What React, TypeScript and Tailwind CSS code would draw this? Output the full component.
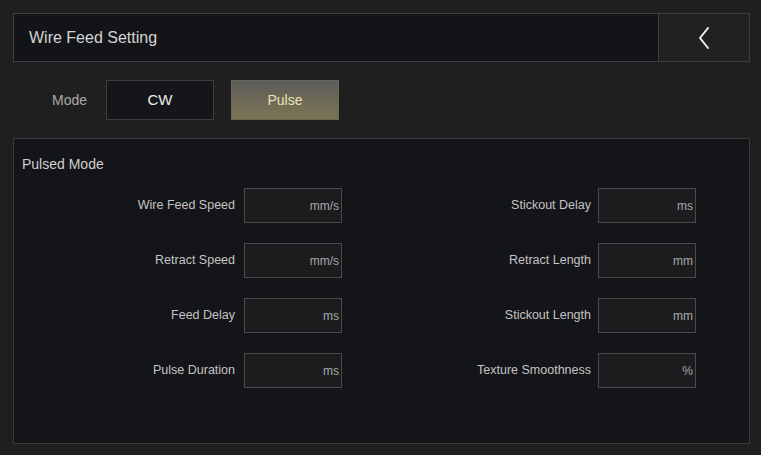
import React from "react";

const left = [
  ["Wire Feed Speed", "mm/s"],
  ["Retract Speed", "mm/s"],
  ["Feed Delay", "ms"],
  ["Pulse Duration", "ms"],
];
const right = [
  ["Stickout Delay", "ms"],
  ["Retract Length", "mm"],
  ["Stickout Length", "mm"],
  ["Texture Smoothness", "%"],
];

function Field({ label, unit, gap }: { label: string; unit: string; gap: string }) {
  return (
    <div className="flex items-center">
      <div className="w-[200px] text-right text-[12.5px] text-[#c4c4c4]">{label}</div>
      <div
        className={`${gap} h-[35px] w-[98px] border border-[#4a4a4a] bg-[#1b1c1e] flex items-center justify-end pr-[2px] text-[12px] text-[#a8a8a8]`}
      >
        {unit}
      </div>
    </div>
  );
}

export default function App() {
  return (
    <div
      className="w-[761px] h-[455px] bg-[#1f1f1f] overflow-hidden pt-[13px] px-[13px]"
      style={{ fontFamily: '"Liberation Sans", Arial, sans-serif' }}
    >
      <div className="flex h-[49px] w-[737px] border border-[#3e3e3e] bg-[#131417]">
        <div className="flex-1 flex items-center pl-[15px] text-[16px] text-[#d4d4d4]">
          Wire Feed Setting
        </div>
        <div className="w-[91px] h-full border-l border-[#3e3e3e] bg-[#202123] flex items-center justify-center">
          <svg width="14" height="24" viewBox="0 0 14 24">
            <path d="M11 2 L3 12 L11 22" fill="none" stroke="#f2f2f2" strokeWidth="2" strokeLinecap="round" strokeLinejoin="round" />
          </svg>
        </div>
      </div>

      <div className="flex items-center h-[40px] mt-[18px]">
        <div className="w-[93px] pl-[39px] text-[14px] text-[#a9a9a9]">Mode</div>
        <div className="w-[108px] h-[40px] border border-[#3e3e3e] bg-[#151619] flex items-center justify-center text-[15px] text-[#eeeeee]">
          CW
        </div>
        <div className="ml-[17px] w-[108px] h-[40px] border border-[#6a6758] bg-gradient-to-b from-[#5d5d5a] to-[#7c7452] flex items-center justify-center text-[14px] text-[#ece2b6]">
          Pulse
        </div>
      </div>

      <div className="mt-[18px] w-[737px] h-[306px] border border-[#3a3a3a] bg-[#141518]">
        <div className="pl-[8px] pt-[17px] text-[14px] leading-[16px] text-[#cfcfcf]">Pulsed Mode</div>
        <div className="flex pl-[21px] mt-[16px]">
          <div className="flex flex-col gap-[20px]">
            {left.map(([l, u]) => (
              <Field key={l} label={l} unit={u} gap="ml-[9px]" />
            ))}
          </div>
          <div className="flex flex-col gap-[20px] ml-[49px]">
            {right.map(([l, u]) => (
              <Field key={l} label={l} unit={u} gap="ml-[7px]" />
            ))}
          </div>
        </div>
      </div>
    </div>
  );
}
